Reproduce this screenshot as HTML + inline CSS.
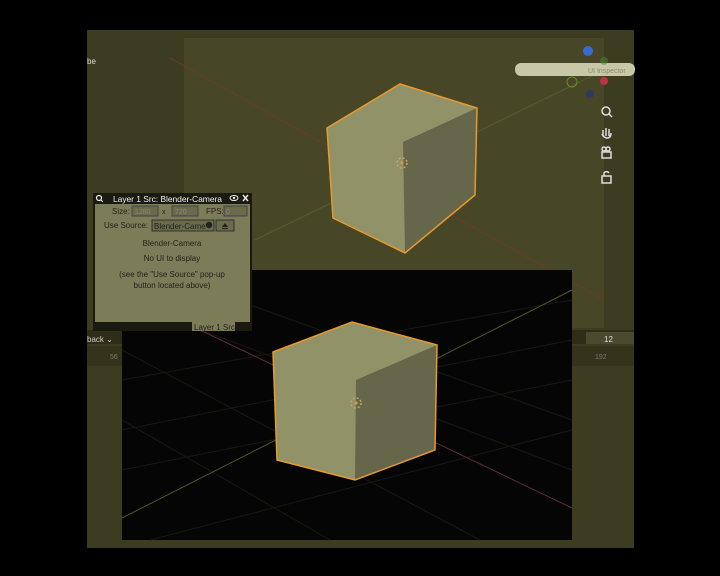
<!DOCTYPE html>
<html><head><meta charset="utf-8"><style>
body{margin:0;background:#000;width:720px;height:576px;overflow:hidden;font-family:"Liberation Sans",sans-serif}
svg{position:absolute;left:0;top:0}
.t{font-family:"Liberation Sans",sans-serif}
</style></head><body>
<svg width="720" height="576" viewBox="0 0 720 576">
<rect width="720" height="576" fill="#000"/>
<rect x="87" y="30" width="547" height="518" fill="#3c3c21"/>
<rect x="184" y="38" width="420" height="290" fill="#474728"/>
<rect x="87" y="330" width="547" height="14" fill="#2e2e18"/>
<rect x="87" y="346" width="547" height="20" fill="#34341c"/>
<line x1="170" y1="58" x2="604" y2="300" stroke="#6e3a28" stroke-width="1"/>
<line x1="255" y1="240" x2="600" y2="72" stroke="#4f5e28" stroke-width="1"/>
<!-- top cube -->
<polygon points="327,128 400,84 477,108 475,195 405,253 333,218" fill="#929269"/>
<polygon points="403,142 477,108 475,195 405,253" fill="#66664a"/>
<polygon points="327,128 400,84 477,108 475,195 405,253 333,218" fill="none" stroke="#e89a2a" stroke-width="1.5"/>
<circle cx="402" cy="163" r="5" fill="none" stroke="#c8a070" stroke-width="1.5" stroke-dasharray="2 2"/>
<circle cx="402" cy="163" r="1.5" fill="#e89a2a"/>
<!-- gizmo -->
<rect x="515" y="63" width="120" height="13" rx="6" fill="#c8c8a8"/>
<text x="588" y="73" font-size="7" fill="#8a8a70" class="t">UI Inspector</text>
<circle cx="588" cy="51" r="5" fill="#3a6ad0"/>
<circle cx="604" cy="61" r="4" fill="#4a8a30" opacity=".5"/>
<circle cx="604" cy="81" r="4" fill="#c03040"/>
<circle cx="572" cy="82" r="5" fill="none" stroke="#6a8a20"/>
<circle cx="590" cy="94" r="4" fill="#303a60"/>
<g fill="none" stroke="#ddd" stroke-width="1.5">
<circle cx="606" cy="111" r="4"/><line x1="609" y1="114" x2="612" y2="117"/>
<path d="M603 136v-6M606 136v-8M609 136v-7M602 134q2 4 5 4q4 0 4-5"/>
<rect x="602" y="152" width="9" height="6"/><circle cx="604" cy="149" r="2"/><circle cx="608" cy="149" r="2"/>
<rect x="602" y="176" width="9" height="7"/><path d="M604 176v-3a3 3 0 0 1 5 0"/>
</g>
<text x="87" y="64" font-size="8" fill="#ddd" class="t">be</text>
<text x="87" y="342" font-size="8" fill="#ccc" class="t">back ⌄</text>
<rect x="586" y="332" width="48" height="12" fill="#4a4a2e"/>
<text x="604" y="342" font-size="8" fill="#ddd" class="t">12</text>
<text x="110" y="359" font-size="7" fill="#777" class="t">56</text>
<text x="595" y="359" font-size="7" fill="#777" class="t">192</text>
<!-- bottom viewport -->
<rect x="122" y="270" width="450" height="270" fill="#050505"/>
<g stroke="#18180f" stroke-width="1">
<line x1="122" y1="380" x2="572" y2="300"/><line x1="122" y1="430" x2="572" y2="340"/><line x1="122" y1="470" x2="572" y2="380"/><line x1="150" y1="540" x2="572" y2="430"/>
<line x1="122" y1="300" x2="572" y2="470"/><line x1="180" y1="280" x2="572" y2="420"/><line x1="122" y1="350" x2="480" y2="540"/><line x1="122" y1="420" x2="330" y2="540"/>
</g>
<line x1="200" y1="330" x2="572" y2="508" stroke="#5e2a38" stroke-width="1"/>
<line x1="122" y1="518" x2="572" y2="290" stroke="#4a5826" stroke-width="1"/>
<polygon points="273,352 352,322 437,345 435,450 355,480 277,460" fill="#929269"/>
<polygon points="356,380 437,345 435,450 355,480" fill="#66664a"/>
<polygon points="273,352 352,322 437,345 435,450 355,480 277,460" fill="none" stroke="#e89a2a" stroke-width="1.5"/>
<circle cx="356" cy="403" r="5" fill="none" stroke="#c8a070" stroke-width="1.5" stroke-dasharray="2 2"/>
<circle cx="356" cy="403" r="1.5" fill="#e89a2a"/>
<!-- panel -->
<rect x="93" y="193" width="159" height="138" fill="#1a1a10"/>
<rect x="95" y="204" width="155" height="118" fill="#7c7c58"/>
<rect x="192" y="322" width="43" height="9" fill="#7c7c58"/>
<text x="194" y="330" font-size="8" fill="#222" class="t">Layer 1 Src</text>
<circle cx="99" cy="198" r="2.5" fill="none" stroke="#eee" stroke-width="1.2"/><line x1="101" y1="200" x2="103" y2="202" stroke="#eee" stroke-width="1.2"/>
<text x="113" y="202" font-size="8.5" fill="#eee" class="t" textLength="109">Layer 1 Src: Blender-Camera</text>
<ellipse cx="234" cy="198" rx="4" ry="2.5" fill="none" stroke="#eee"/><circle cx="234" cy="198" r="1.2" fill="#eee"/>
<path d="M243 195l5 6M248 195l-5 6" stroke="#eee" stroke-width="1.4"/>
<text x="112" y="214" font-size="8" fill="#222" class="t">Size:</text>
<rect x="132" y="206" width="26" height="10" fill="#6a6a4c" stroke="#444"/>
<text x="135" y="214" font-size="7" fill="#8a8a70" class="t">1280</text>
<text x="162" y="214" font-size="7" fill="#222" class="t">x</text>
<rect x="172" y="206" width="26" height="10" fill="#6a6a4c" stroke="#444"/>
<text x="175" y="214" font-size="7" fill="#8a8a70" class="t">720</text>
<text x="206" y="214" font-size="8" fill="#222" class="t">FPS:</text>
<rect x="224" y="206" width="23" height="10" fill="#6a6a4c" stroke="#444"/>
<text x="226" y="214" font-size="7" fill="#8a8a70" class="t">0</text>
<text x="104" y="228" font-size="8" fill="#222" class="t">Use Source:</text>
<rect x="152" y="220" width="62" height="11" fill="#6a6a4c" stroke="#333"/>
<text x="154" y="229" font-size="8" fill="#222" class="t">Blender-Came</text>
<circle cx="209" cy="225" r="3.2" fill="#222"/>
<rect x="216" y="220" width="18" height="11" fill="#6a6a4c" stroke="#333"/>
<path d="M222 227l3-4 3 4zM222 228h6v1h-6z" fill="#222"/>
<g font-size="8" fill="#222" text-anchor="middle" class="t">
<text x="172" y="246">Blender-Camera</text>
<text x="172" y="261">No UI to display</text>
<text x="172" y="277">(see the "Use Source" pop-up</text>
<text x="172" y="288">button located above)</text>
</g>
</svg>
</body></html>
